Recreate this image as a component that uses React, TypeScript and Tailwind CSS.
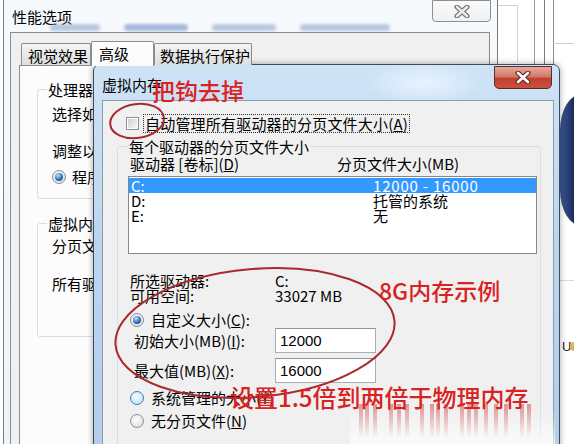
import React from "react";

function XGlyph({ outer, inner, w = 16, h = 13 }: { outer: string; inner: string; w?: number; h?: number }) {
  return (
    <svg width={w} height={h} viewBox="0 0 16 13">
      <path d="M3 2 L13 11 M13 2 L3 11" stroke={outer} strokeWidth={5} strokeLinecap="round" fill="none" />
      <path d="M3 2 L13 11 M13 2 L3 11" stroke={inner} strokeWidth={2.6} strokeLinecap="round" fill="none" />
    </svg>
  );
}

function Radio({ checked = false, hover = false }: { checked?: boolean; hover?: boolean }) {
  const ring = hover
    ? "border-[#3c7fb1] bg-[radial-gradient(circle_at_45%_40%,#f2faff,#b7dff7)]"
    : "border-[#8e8f8f] bg-[radial-gradient(circle_at_45%_40%,#ffffff,#d6d6d6)]";
  return (
    <span className={`flex w-[14px] h-[14px] shrink-0 rounded-full border items-center justify-center ${ring}`}>
      {checked && (
        <span className="w-[8px] h-[8px] rounded-full bg-[radial-gradient(circle_at_38%_32%,#b8e4ff,#2a73b8_55%,#0d3c6e)]" />
      )}
    </span>
  );
}

function Checkbox() {
  return (
    <span className="flex w-[13px] h-[13px] shrink-0 border border-[#8e8f8f] bg-white p-[1px]">
      <span className="w-full h-full bg-[linear-gradient(135deg,#cfcfcf,#f6f6f6)]" />
    </span>
  );
}

function Desktop() {
  return (
    <>
      <div className="absolute left-[497px] top-0 w-px h-[62px] bg-[#6d6d6d]" />
      <div className="absolute left-[497px] top-[5px] w-[21px] h-[57px] border-t border-r border-[#d0d0d0]" />
      <div className="absolute left-[534px] top-0 w-px h-[64px] bg-[#9a9a9a]" />
      <div className="absolute left-[544px] top-0 w-px h-[64px] bg-[#7c7c7c]" />
      <div className="absolute left-[553px] top-0 w-px h-[64px] bg-[#8a8a8a]" />
      <div className="absolute left-[553px] top-[43px] w-[21px] h-px bg-[#cfcfcf]" />
      <div className="absolute left-[560px] top-[94px] w-[40px] h-[132px] rounded-tl-[22px_36px] rounded-bl-[22px_36px] bg-[linear-gradient(90deg,#3b5a96,#1a2c5e_35%,#0f1b42)]" />
      <div className="absolute left-[560px] top-[280px] w-[14px] h-px bg-[#d8d8d8]" />
      <div className="absolute left-[562px] top-[340px] text-[13px] leading-[13px] [font-family:'Liberation_Sans',sans-serif] text-[#222]">U</div>
      <div className="absolute left-[570px] top-[342px] w-[4px] h-[9px] bg-[#d8b45a] rounded-l-full" />
    </>
  );
}

function PerfWindow() {
  return (
    <div className="absolute left-[3px] top-[-10px] w-[495px] h-[470px] border border-[#6f7c8b] rounded-t-[7px] bg-[linear-gradient(180deg,#f7fafd,#eef3f8)]">
      <div className="relative h-[41px] pl-[8px] pt-[18px]">
        <span>性能选项</span>
        <div className="absolute left-[46px] top-[33px] flex gap-[24px] opacity-60 blur-[1.5px]">
          <span className="w-[50px] h-[7px] bg-[#8ea9cf] rounded" />
          <span className="w-[64px] h-[7px] bg-[#6f8fc4] rounded" />
          <span className="w-[64px] h-[7px] bg-[#8ea9cf] rounded" />
          <span className="w-[90px] h-[7px] bg-[#8ea9cf] rounded" />
        </div>
        <div className="absolute left-[428px] top-[9px] w-[59px] h-[22px] border border-[#8a8f96] rounded-b-[4px] bg-[linear-gradient(180deg,#fbfbfb,#eef0f2)] flex items-center justify-center">
          <XGlyph outer="#6e6e6e" inner="#eaeaea" />
        </div>
      </div>
      <div className="ml-[6px] w-[480px] h-[430px] border border-[#8c8c8c] bg-[#f0f0f0]">
        <div className="flex items-end h-[32px] pl-[10px] relative z-10">
          <div className="w-[70px] h-[22px] border border-[#898c95] border-b-0 rounded-t-[2px] bg-[linear-gradient(180deg,#f4f4f4,#dedede)] pl-[6px] pt-[4px]">视觉效果</div>
          <div className="w-[63px] h-[25px] border border-[#898c95] border-b-0 rounded-t-[2px] bg-[#fcfcfc] pl-[7px] pt-[4px] -mb-[1px]">高级</div>
          <div className="w-[98px] h-[22px] border border-[#898c95] border-b-0 rounded-t-[2px] bg-[linear-gradient(180deg,#f4f4f4,#dedede)] pl-[5px] pt-[4px]">数据执行保护</div>
        </div>
        <div className="ml-[8px] w-[462px] h-[390px] border border-[#898c95] bg-[#fcfcfc] pt-[23px] pl-[17px]">
          <div className="relative w-[420px] border border-[#d5dfe5] rounded-[3px] pt-[16px] pb-[14px] pl-[14px]">
            <span className="absolute left-[9px] top-[-8px] bg-[#fcfcfc] px-[1px]">处理器计划</span>
            <div>选择如何分配处理器资源。</div>
            <div className="mt-[22px]">调整以优化性能:</div>
            <div className="mt-[11px] flex items-center gap-[6px]">
              <Radio checked />
              <span>程序(<u>P</u>)</span>
              <span className="ml-[80px]"><Radio /></span>
              <span>后台服务(<u>S</u>)</span>
            </div>
          </div>
          <div className="relative mt-[24px] w-[420px] border border-[#d5dfe5] rounded-[3px] pt-[14px] pb-[45px] pl-[14px]">
            <span className="absolute left-[9px] top-[-8px] bg-[#fcfcfc] px-[1px]">虚拟内存</span>
            <div>分页文件是硬盘上的一块区域，Windows 当作 RAM 使用。</div>
            <div className="mt-[23px]">所有驱动器总分页文件大小:</div>
          </div>
        </div>
      </div>
    </div>
  );
}

function VmDialog() {
  return (
    <div className="absolute left-[93px] top-[64px] w-[467px] h-[400px] border border-[#3d4b5c] rounded-t-[7px] shadow-[0_0_6px_rgba(0,0,0,0.35)] bg-[radial-gradient(ellipse_60px_22px_at_330px_18px,rgba(235,245,255,0.9),transparent),linear-gradient(180deg,#cfe3f6_0%,#bcd5ef_45%,#b3cdea_100%)]">
      <div className="relative h-[35px] pl-[8px] pt-[12px]">
        <span>虚拟内存</span>
        <div className="absolute left-[400px] top-[1px] w-[58px] h-[23px] border border-[#5e2a25] rounded-b-[5px] bg-[linear-gradient(180deg,#e4a89c_0%,#d47a6a_45%,#c2402f_55%,#c9503c_100%)] flex items-center justify-center">
          <XGlyph outer="#6a2b24" inner="#ffffff" />
        </div>
      </div>
      <div className="ml-[8px] w-[452px] h-[370px] border border-[#8a9cb2] bg-[#f0f0f0] pt-[13px]">
        <div className="flex items-center ml-[23px] h-[19px]">
          <Checkbox />
          <span className="ml-[4px] h-[19px] border border-dotted border-[#333] px-[1px] leading-[17px] tracking-[0.2px]">
            自动管理所有驱动器的分页文件大小(<u>A</u>)
          </span>
        </div>
        <div className="relative mt-[13px] ml-[14px] w-[424px] h-[340px] border border-[#d5dfe5] rounded-[3px] pt-[9px]">
          <span className="absolute left-[10px] top-[-8px] bg-[#f0f0f0] px-[1px]">每个驱动器的分页文件大小</span>
          <div className="flex pl-[12px]">
            <span className="w-[207px]">驱动器 [卷标](<u>D</u>)</span>
            <span>分页文件大小(MB)</span>
          </div>
          <div className="ml-[10px] mt-[5px] w-[409px] h-[78px] border border-[#828790] bg-white pt-px">
            <div className="flex h-[15px] bg-[#3399ff] text-white pl-[2px]">
              <span className="w-[242px]">C:</span>
              <span className="tracking-[0.8px]">12000 - 16000</span>
            </div>
            <div className="flex h-[15px] pl-[2px]">
              <span className="w-[242px]">D:</span>
              <span>托管的系统</span>
            </div>
            <div className="flex h-[15px] pl-[2px]">
              <span className="w-[242px]">E:</span>
              <span>无</span>
            </div>
          </div>
          <div className="ml-[12px] mt-[19px] flex h-[15px]">
            <span className="w-[145px]">所选驱动器:</span>
            <span>C:</span>
          </div>
          <div className="ml-[12px] flex h-[15px]">
            <span className="w-[145px]">可用空间:</span>
            <span>33027 MB</span>
          </div>
          <div className="ml-[12px] mt-[9px] flex items-center h-[15px] gap-[7px]">
            <Radio checked />
            <span>自定义大小(<u>C</u>):</span>
          </div>
          <div className="ml-[12px] mt-[1px] flex items-center h-[25px]">
            <span className="w-[145px] pl-[4px]">初始大小(MB)(<u>I</u>):</span>
            <div className="w-[101px] h-[25px] border border-[#abadb3] border-t-[#8f939c] bg-white pl-[4px] flex items-center [font-family:'Liberation_Sans',sans-serif] text-[15px]">12000</div>
          </div>
          <div className="ml-[12px] mt-[5px] flex items-center h-[25px]">
            <span className="w-[145px] pl-[4px]">最大值(MB)(<u>X</u>):</span>
            <div className="w-[101px] h-[25px] border border-[#abadb3] border-t-[#8f939c] bg-white pl-[4px] flex items-center [font-family:'Liberation_Sans',sans-serif] text-[15px]">16000</div>
          </div>
          <div className="ml-[12px] mt-[7px] flex items-center h-[15px] gap-[7px]">
            <Radio hover />
            <span>系统管理的大小(<u>Y</u>)</span>
          </div>
          <div className="ml-[12px] mt-[8px] flex items-center h-[15px] gap-[7px]">
            <Radio />
            <span>无分页文件(<u>N</u>)</span>
          </div>
        </div>
      </div>
    </div>
  );
}

function Annotations() {
  const streaks = [359, 365, 373, 389, 397, 405, 420, 430, 436, 444, 460, 467, 474, 484, 494, 504, 520, 527];
  return (
    <>
      <div className="absolute left-[350px] top-[410px] w-[205px] h-[34px] bg-[linear-gradient(180deg,rgba(255,255,255,0),rgba(255,255,255,0.7))]" />
      {streaks.map((x, i) => (
        <div
          key={i}
          className="absolute top-[404px] w-[4px] h-[34px] bg-[linear-gradient(180deg,rgba(205,60,60,0.5),rgba(205,60,60,0))]"
          style={{ left: x }}
        />
      ))}
      <svg className="absolute left-0 top-0 pointer-events-none" width={574} height={444}>
        <ellipse cx={137} cy={121} rx={27} ry={17} fill="none" stroke="#a82a30" strokeWidth={2} transform="rotate(-8 137 121)" />
        <ellipse cx={255} cy={333} rx={140} ry={64} fill="none" stroke="#a82a30" strokeWidth={2} transform="rotate(-5 255 333)" />
      </svg>
      <div className="absolute left-[152px] top-[79px] text-[23px] leading-[23px] font-medium text-[#d92222]">把钩去掉</div>
      <div className="absolute left-[379px] top-[279px] text-[23px] leading-[23px] font-medium text-[#d92222]">8G内存示例</div>
      <div className="absolute left-[230px] top-[385px] text-[24px] leading-[24px] font-medium text-[#d92222]">设置1.5倍到两倍于物理内存</div>
    </>
  );
}

export default function App() {
  return (
    <div className="relative w-[574px] h-[444px] overflow-hidden bg-white text-black [font-family:'Noto_Sans_CJK_SC',sans-serif] text-[15px] leading-[15px]">
      <Desktop />
      <PerfWindow />
      <VmDialog />
      <Annotations />
    </div>
  );
}
